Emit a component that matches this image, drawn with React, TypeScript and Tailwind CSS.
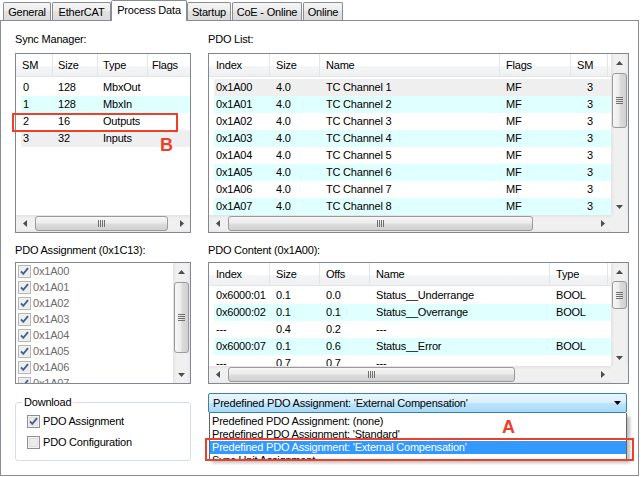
import React from "react";

type Dir = "up" | "down" | "left" | "right";

const CYAN = "bg-[#e0ffff]";
const GREY = "bg-[#efefef]";

function Tri({ dir }: { dir: Dir }) {
  const v = dir === "up" || dir === "down";
  const pts =
    dir === "up"
      ? "0,4 3.5,0 7,4"
      : dir === "down"
      ? "0,0 7,0 3.5,4"
      : dir === "left"
      ? "4,0 4,7 0,3.5"
      : "0,0 0,7 4,3.5";
  return (
    <svg width={v ? 7 : 4} height={v ? 4 : 7} viewBox={v ? "0 0 7 4" : "0 0 4 7"}>
      <polygon points={pts} fill="#4d4d4d" />
    </svg>
  );
}

function VScroll({ thumb }: { thumb: string }) {
  return (
    <div className="w-[17px] shrink-0 flex flex-col bg-[linear-gradient(to_right,#e3e3e3,#f0f0f0_20%,#f0f0f0_80%,#e8e8e8)]">
      <div className="h-[17px] shrink-0 flex items-center justify-center">
        <Tri dir="up" />
      </div>
      <div className="flex-1 min-h-0 px-[1px]">
        <div
          className={`${thumb} rounded-[3px] border border-[#9a9a9a] bg-[linear-gradient(to_right,#f7f7f7,#ececec_45%,#dcdcdc_55%,#d0d0d0)] flex items-center justify-center`}
        >
          <svg width="7" height="7" viewBox="0 0 7 7">
            <path d="M0 0.5H7M0 2.5H7M0 4.5H7M0 6.5H7" stroke="#707070" strokeWidth="1" />
          </svg>
        </div>
      </div>
      <div className="h-[17px] shrink-0 flex items-center justify-center">
        <Tri dir="down" />
      </div>
    </div>
  );
}

function HScroll({ thumb }: { thumb: string }) {
  return (
    <div className="h-[17px] flex-1 min-w-0 flex bg-[linear-gradient(to_bottom,#e3e3e3,#f0f0f0_20%,#f0f0f0_80%,#e8e8e8)]">
      <div className="w-[17px] shrink-0 flex items-center justify-center">
        <Tri dir="left" />
      </div>
      <div className="flex-1 min-w-0 py-[1px] flex">
        <div
          className={`${thumb} h-full rounded-[3px] border border-[#9a9a9a] bg-[linear-gradient(to_bottom,#f7f7f7,#ececec_45%,#dcdcdc_55%,#d0d0d0)] flex items-center justify-center`}
        >
          <svg width="7" height="7" viewBox="0 0 7 7">
            <path d="M0.5 0V7M2.5 0V7M4.5 0V7M6.5 0V7" stroke="#707070" strokeWidth="1" />
          </svg>
        </div>
      </div>
      <div className="w-[17px] shrink-0 flex items-center justify-center">
        <Tri dir="right" />
      </div>
    </div>
  );
}

function CheckBox({ checked, disabled }: { checked: boolean; disabled?: boolean }) {
  return (
    <svg width="13" height="13" viewBox="0 0 13 13" className="shrink-0">
      <rect x="0.5" y="0.5" width="12" height="12" fill="#f4f4f4" stroke={disabled ? "#b6b6b6" : "#8e8f8f"} />
      <rect x="2" y="2" width="9" height="9" fill={disabled ? "#e9e9e9" : "#dedede"} />
      <rect x="3" y="3" width="7" height="7" fill={disabled ? "#f0f0f0" : "#ececec"} />
      {checked && (
        <path d="M3 6.3 L5.3 8.8 L10 3.2" stroke="#4a5f97" strokeWidth="1.9" fill="none" />
      )}
    </svg>
  );
}

const HDR =
  "h-[23px] flex shrink-0 border-b border-[#e2e4e8] bg-[linear-gradient(to_bottom,#ffffff,#ffffff_55%,#f5f6f7_55%,#eff0f2)]";
const HSEP = "border-r border-[#e3e5e9] flex items-center";

function SyncManager() {
  const rows = [
    { c: ["0", "128", "MbxOut"], bg: "" },
    { c: ["1", "128", "MbxIn"], bg: CYAN },
    { c: ["2", "16", "Outputs"], bg: "" },
    { c: ["3", "32", "Inputs"], bg: GREY },
  ];
  return (
    <div className="relative h-[180px] border border-[#828790] bg-white flex flex-col">
      <div className="flex-1 min-h-0 overflow-hidden">
        <div className={HDR}>
          <div className={`w-[37px] pl-[6px] ${HSEP}`}>SM</div>
          <div className={`w-[45px] pl-[5px] ${HSEP}`}>Size</div>
          <div className={`w-[50px] pl-[5px] ${HSEP}`}>Type</div>
          <div className="flex-1 pl-[4px] flex items-center">Flags</div>
        </div>
        <div className="pt-[2px]">
          {rows.map((r, i) => (
            <div key={i} className={`h-[17px] ml-[5px] flex items-center ${r.bg}`}>
              <div className="w-[32px] pl-[2px]">{r.c[0]}</div>
              <div className="w-[45px] pl-[5px]">{r.c[1]}</div>
              <div className="w-[50px] pl-[5px]">{r.c[2]}</div>
              <div className="flex-1" />
            </div>
          ))}
        </div>
      </div>
      <div className="flex h-[17px] shrink-0">
        <HScroll thumb="ml-[2px] w-[133px]" />
      </div>
      <div className="absolute left-[-4px] top-[59px] w-[166px] h-[19px] border-2 border-[#ee3f29]" />
      <div className="absolute left-[144px] top-[82px] text-[18px] leading-[18px] font-bold text-[#ee3f29] font-['Liberation_Sans',Arial,sans-serif] tracking-normal">
        B
      </div>
    </div>
  );
}

function PdoList() {
  const rows = Array.from({ length: 8 }, (_, i) => ({
    c: [`0x1A0${i}`, "4.0", `TC Channel ${i + 1}`, "MF", "3"],
    bg: i === 0 ? GREY : i % 2 === 1 ? CYAN : "",
  }));
  return (
    <div className="h-[180px] border border-[#828790] bg-white flex flex-col">
      <div className="flex flex-1 min-h-0">
        <div className="flex-1 min-w-0 overflow-hidden">
          <div className={HDR}>
            <div className={`w-[61px] shrink-0 pl-[7px] ${HSEP}`}>Index</div>
            <div className={`w-[50px] shrink-0 pl-[6px] ${HSEP}`}>Size</div>
            <div className={`w-[180px] shrink-0 pl-[6px] ${HSEP}`}>Name</div>
            <div className={`w-[71px] shrink-0 pl-[6px] ${HSEP}`}>Flags</div>
            <div className={`w-[37px] shrink-0 pl-[6px] ${HSEP}`}>SM</div>
            <div className="flex-1" />
          </div>
          <div className="pt-[2px]">
            {rows.map((r, i) => (
              <div key={i} className={`h-[17px] ml-[5px] flex items-center ${r.bg}`}>
                <div className="w-[56px] shrink-0 pl-[2px]">{r.c[0]}</div>
                <div className="w-[50px] shrink-0 pl-[6px]">{r.c[1]}</div>
                <div className="w-[180px] shrink-0 pl-[6px]">{r.c[2]}</div>
                <div className="w-[71px] shrink-0 pl-[6px]">{r.c[3]}</div>
                <div className="w-[37px] shrink-0 pl-[16px]">{r.c[4]}</div>
                <div className="flex-1" />
              </div>
            ))}
          </div>
        </div>
        <VScroll thumb="mt-[2px] h-[55px]" />
      </div>
      <div className="flex h-[17px] shrink-0">
        <HScroll thumb="ml-[2px] w-[305px]" />
        <div className="w-[17px] bg-[#f0f0f0]" />
      </div>
    </div>
  );
}

function PdoAssignment() {
  const items = Array.from({ length: 8 }, (_, i) => `0x1A0${i}`);
  return (
    <div className="h-[122px] border border-[#828790] bg-white flex">
      <div className="flex-1 min-w-0 overflow-hidden">
        {items.map((t) => (
          <div key={t} className="h-[16px] flex items-center pl-[2px] gap-[2px] text-[#6d6d6d]">
            <CheckBox checked disabled />
            <span>{t}</span>
          </div>
        ))}
      </div>
      <VScroll thumb="mt-[2px] h-[71px]" />
    </div>
  );
}

function PdoContent() {
  const rows = [
    ["0x6000:01", "0.1", "0.0", "Status__Underrange", "BOOL"],
    ["0x6000:02", "0.1", "0.1", "Status__Overrange", "BOOL"],
    ["---", "0.4", "0.2", "---", ""],
    ["0x6000:07", "0.1", "0.6", "Status__Error", "BOOL"],
    ["---", "0.7", "0.7", "---", ""],
  ];
  return (
    <div className="h-[122px] border border-[#828790] bg-white flex flex-col">
      <div className="flex flex-1 min-h-0">
        <div className="flex-1 min-w-0 overflow-hidden">
          <div className={HDR}>
            <div className={`w-[61px] shrink-0 pl-[7px] ${HSEP}`}>Index</div>
            <div className={`w-[50px] shrink-0 pl-[6px] ${HSEP}`}>Size</div>
            <div className={`w-[50px] shrink-0 pl-[6px] ${HSEP}`}>Offs</div>
            <div className={`w-[180px] shrink-0 pl-[6px] ${HSEP}`}>Name</div>
            <div className={`w-[58px] shrink-0 pl-[6px] ${HSEP}`}>Type</div>
            <div className="flex-1" />
          </div>
          <div className="pt-[1px]">
            {rows.map((r, i) => (
              <div key={i} className={`h-[17px] ml-[5px] flex items-center ${i % 2 === 1 ? CYAN : ""}`}>
                <div className="w-[56px] shrink-0 pl-[2px]">{r[0]}</div>
                <div className="w-[50px] shrink-0 pl-[6px]">{r[1]}</div>
                <div className="w-[50px] shrink-0 pl-[6px]">{r[2]}</div>
                <div className="w-[180px] shrink-0 pl-[6px]">{r[3]}</div>
                <div className="w-[58px] shrink-0 pl-[6px]">{r[4]}</div>
                <div className="flex-1" />
              </div>
            ))}
          </div>
        </div>
        <VScroll thumb="mt-[1px] h-[28px]" />
      </div>
      <div className="flex h-[17px] shrink-0">
        <HScroll thumb="ml-[2px] w-[287px]" />
        <div className="w-[17px] bg-[#f0f0f0]" />
      </div>
    </div>
  );
}

function Combo() {
  return (
    <div className="relative mt-[9px] h-[20px] mr-[2px]">
      <div className="h-full rounded-[2px] border border-[#3c7fb1] bg-[linear-gradient(to_bottom,#eaf6fd,#d9f0fc_50%,#bee6fd_50%,#a7d9f5)] flex items-center pl-[4px] pr-[5px]">
        <span className="flex-1 whitespace-nowrap">Predefined PDO Assignment: 'External Compensation'</span>
        <svg width="7" height="4" viewBox="0 0 7 4">
          <polygon points="0,0 7,0 3.5,4" fill="#000" />
        </svg>
      </div>
      <div className="absolute top-[20px] left-[1px] right-0 h-[47px] border border-t-0 border-[#646464] bg-white overflow-hidden shadow-[3px_3px_3px_rgba(0,0,0,0.25)] pt-[2px] flex flex-col">
        <div className="h-[13px] shrink-0 pl-[2px] whitespace-nowrap">Predefined PDO Assignment: (none)</div>
        <div className="h-[13px] shrink-0 pl-[2px] whitespace-nowrap">Predefined PDO Assignment: 'Standard'</div>
        <div className="h-[13px] shrink-0 pl-[2px] whitespace-nowrap bg-[#3399ff] text-white">
          Predefined PDO Assignment: 'External Compensation'
        </div>
        <div className="h-[13px] shrink-0 pl-[2px] whitespace-nowrap">Sync Unit Assignment...</div>
      </div>
      <div className="absolute left-[-3px] top-[45px] w-[429px] h-[23px] border-2 border-[#ee3f29]" />
      <div className="absolute left-[294px] top-[25px] text-[18px] leading-[18px] font-bold text-[#ee3f29] tracking-normal">
        A
      </div>
    </div>
  );
}

function Tab({ label, cls, active }: { label: string; cls: string; active?: boolean }) {
  if (active)
    return (
      <div
        className={`${cls} relative z-10 h-[21px] mb-[-1px] bg-white border border-b-0 border-[#898c95] rounded-t-[2px] flex items-start justify-center pt-[3px]`}
      >
        {label}
      </div>
    );
  return (
    <div
      className={`${cls} h-[18px] border border-b-0 border-[#898c95] rounded-t-[2px] bg-[linear-gradient(to_bottom,#f5f5f5,#ececec_50%,#e2e2e2_50%,#dcdcdc)] flex items-center justify-center pt-[1px]`}
    >
      {label}
    </div>
  );
}

export default function App() {
  return (
    <div className="w-[641px] h-[477px] bg-white text-black text-[11px] leading-[13px] tracking-[-0.2px] font-['Liberation_Sans',Arial,sans-serif] overflow-hidden">
      <div className="h-[20px] flex items-end">
        <Tab label="General" cls="ml-[3px] w-[48px]" />
        <Tab label="EtherCAT" cls="ml-[1px] w-[59px]" />
        <Tab label="Process Data" cls="w-[76px]" active />
        <Tab label="Startup" cls="w-[44px]" />
        <Tab label="CoE - Online" cls="ml-[1px] w-[70px]" />
        <Tab label="Online" cls="ml-[1px] w-[40px]" />
      </div>
      <div className="w-[639px] h-[456px] border border-[#898c95] bg-white pl-[14px] flex gap-[17px]">
        <div className="w-[176px] flex flex-col">
          <div className="mt-[12px] h-[13px]">Sync Manager:</div>
          <div className="mt-[7px]">
            <SyncManager />
          </div>
          <div className="mt-[11px] h-[13px]">PDO Assignment (0x1C13):</div>
          <div className="mt-[5px]">
            <PdoAssignment />
          </div>
          <fieldset className="mt-[12px] h-[65px] border border-[#d5dfe5] rounded-[3px]">
            <legend className="ml-[6px] px-[2px] leading-[13px]">Download</legend>
            <div className="pl-[11px] pt-[6px] flex flex-col gap-[8px]">
              <div className="h-[13px] flex items-center gap-[3px]">
                <CheckBox checked />
                <span>PDO Assignment</span>
              </div>
              <div className="h-[13px] flex items-center gap-[3px]">
                <CheckBox checked={false} />
                <span>PDO Configuration</span>
              </div>
            </div>
          </fieldset>
        </div>
        <div className="w-[421px] flex flex-col">
          <div className="mt-[12px] h-[13px]">PDO List:</div>
          <div className="mt-[7px]">
            <PdoList />
          </div>
          <div className="mt-[11px] h-[13px]">PDO Content (0x1A00):</div>
          <div className="mt-[5px]">
            <PdoContent />
          </div>
          <Combo />
        </div>
      </div>
    </div>
  );
}
